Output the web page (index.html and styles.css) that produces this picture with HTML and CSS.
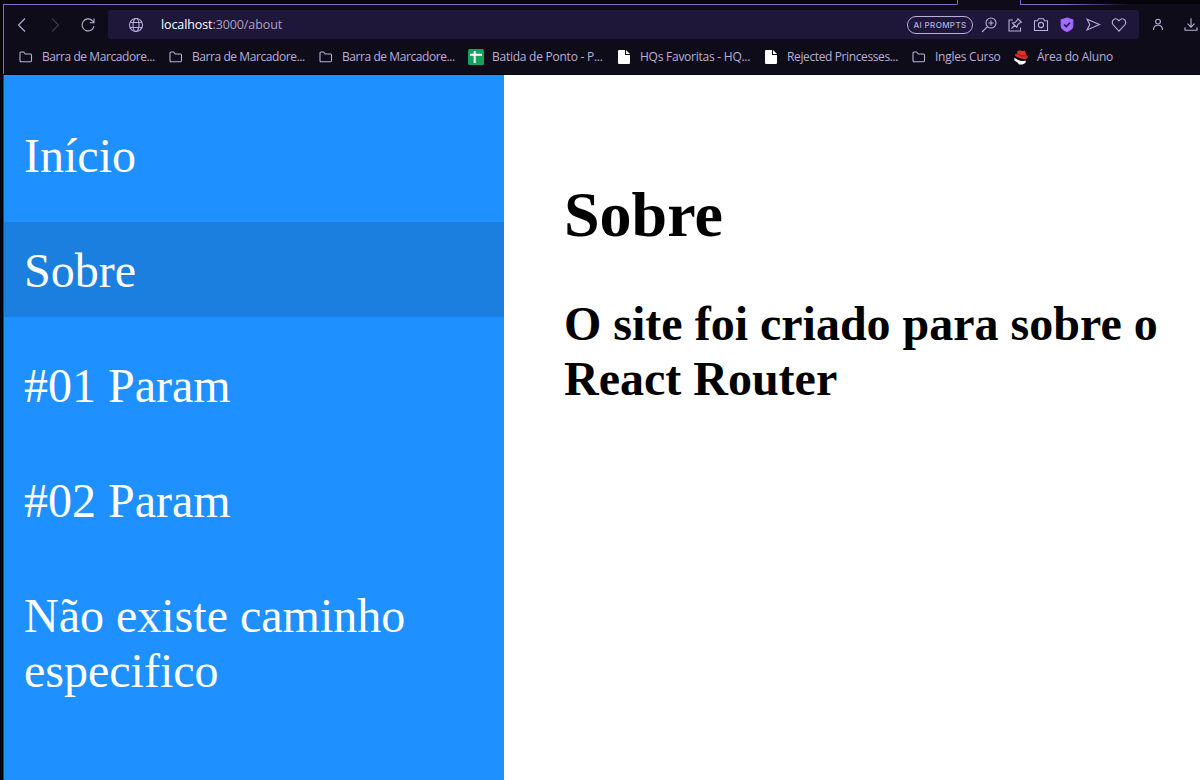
FILE: index.html
```html
<!DOCTYPE html>
<html lang="pt-BR">
<head>
<meta charset="utf-8">
<title>Sobre</title>
<link rel="stylesheet" href="styles.css">
</head>
<body>
<svg class="defs" width="0" height="0"><defs>
<symbol id="folder" viewBox="0 0 14 12"><path d="M1 2.2Q1 1 2.2 1H4.6L6.2 3H11.4Q12.5 3 12.5 4.2V9.6Q12.5 10.8 11.4 10.8H2.2Q1 10.8 1 9.6Z"/></symbol>
<symbol id="page" viewBox="0 0 12 14"><path d="M0 1Q0 0 1 0H7V5H12V13Q12 14 11 14H1Q0 14 0 13ZM8 0L12 4H8Z" fill="#fff" stroke="none"/></symbol>
</defs></svg>
<div class="window">
<header class="chrome">
  <div class="tabs-edge"><div class="edge-left"></div><div class="tab-gap"></div><div class="edge-right"></div></div>
  <div class="toolbar">
    <div class="controls">
      <svg class="icon" width="16" height="16" viewBox="0 0 16 16"><path d="M11 1.5L4.5 8L11 14.5"/></svg>
      <svg class="icon dim" width="16" height="16" viewBox="0 0 16 16"><path d="M5 1.5L11.5 8L5 14.5"/></svg>
      <svg class="icon" width="16" height="16" viewBox="0 0 16 16"><path d="M14 9A6 6 0 1 1 12.5 3.8L14 5.5M14 1.5V5.7H9.8"/></svg>
    </div>
    <div class="address">
      <svg class="icon" width="16" height="16" viewBox="0 0 16 16"><circle cx="8" cy="8" r="6.5"/><ellipse cx="8" cy="8" rx="3" ry="6.5"/><path d="M2.2 5.5H13.8M2.2 10.5H13.8"/></svg>
      <div class="url"><b>localhost</b>:3000/about</div>
      <div class="actions">
        <span class="prompts">AI PROMPTS</span>
        <svg class="icon" width="16" height="16" viewBox="0 0 16 16"><circle cx="10" cy="6" r="5"/><path d="M6.5 9.6L1 15M7.5 6H12.5M10 3.5V8.5"/></svg>
        <svg class="icon" width="16" height="16" viewBox="0 0 16 16"><path d="M6 3H2V14H13.5V10.5M4.5 11.5L8 8M5.5 6L9.8 10.3L10.8 7.5L14 4.8L11.2 2L8.5 5.2ZM10.5 1.3L14.7 5.5"/></svg>
        <svg class="icon" width="16" height="16" viewBox="0 0 16 16"><path d="M1.5 3.7H4.5L5.5 1.7H10.5L11.5 3.7H14.5V13.5H1.5Z"/><circle cx="8" cy="8" r="2.6"/></svg>
        <svg class="icon" width="16" height="16" viewBox="0 0 16 16"><path d="M8 1L13.8 3V8.5Q13.8 12.5 8 14.5Q2.2 12.5 2.2 8.5V3Z" fill="#a46cff" stroke="#a46cff"/><path d="M5 7.5L7.3 9.7L11 5.7" stroke="#221342" stroke-width="1.6"/></svg>
        <svg class="icon" width="16" height="16" viewBox="0 0 16 16"><path d="M2 2.2L14.5 7.6L2 13L4.8 7.6Z"/></svg>
        <svg class="icon" width="16" height="16" viewBox="0 0 16 16"><path d="M8 14.2L2.3 8C-.3 4.7 3 .2 6.6 2.4L8 3.8L9.4 2.4C13 .2 16.3 4.7 13.7 8Z"/></svg>
      </div>
    </div>
    <div class="extras">
      <svg class="icon" width="16" height="16" viewBox="0 0 16 16"><circle cx="8" cy="4.6" r="2.4"/><path d="M3.5 13Q3.5 8.2 8 8.2T12.5 13"/></svg>
      <svg class="icon" width="16" height="16" viewBox="0 0 16 16"><path d="M8 1.2V10M4.5 6.7L8 10.2L11.5 6.7M2 10.3V13.3H14V10.3"/></svg>
    </div>
  </div>
  <nav class="bookmarks">
    <a class="mark wide"><svg class="icon" width="14" height="12"><use href="#folder"/></svg><span>Barra de Marcadore...</span></a>
    <a class="mark wide"><svg class="icon" width="14" height="12"><use href="#folder"/></svg><span>Barra de Marcadore...</span></a>
    <a class="mark third"><svg class="icon" width="14" height="12"><use href="#folder"/></svg><span>Barra de Marcadore...</span></a>
    <a class="mark sheet"><svg width="16" height="16" viewBox="0 0 16 16"><rect width="16" height="16" rx="1.5" fill="#16a05d"/><path d="M2 5.8H14M6.7 2V14" stroke="#fff" stroke-width="2"/></svg><span>Batida de Ponto - P...</span></a>
    <a class="mark doc"><svg width="12" height="14"><use href="#page"/></svg><span>HQs Favoritas - HQ...</span></a>
    <a class="mark doc rejected"><svg width="12" height="14"><use href="#page"/></svg><span>Rejected Princesses...</span></a>
    <a class="mark course"><svg class="icon" width="14" height="12"><use href="#folder"/></svg><span>Ingles Curso</span></a>
    <a class="mark student"><svg width="16" height="16" viewBox="0 0 16 16"><path d="M1.2 9L4 10L7 11.5L13 11.8L12.3 14L9.5 15.6H6L4.5 13.5L1.5 11.5Z" fill="#fff"/><path d="M1 6.5Q3 11 8 11.8Q14 12 15 9L12 7L3 5Z" fill="#05040a"/><path d="M4.5 2L7 1.2L9 2L12 1.8L13.3 6L15 8Q14.5 10.3 10.5 10Q4.5 9.3 1.8 6.2L2 5L4 5.2Z" fill="#e32a2e"/><path d="M4.3 4.8Q8 7.8 12.8 7" fill="none" stroke="#771219" stroke-width=".8"/></svg><span>Área do Aluno</span></a>
  </nav>
</header>
<div class="app">
  <aside class="menu">
    <a class="link">Início</a>
    <a class="link active">Sobre</a>
    <a class="link">#01 Param</a>
    <a class="link">#02 Param</a>
    <a class="link">Não existe caminho especifico</a>
  </aside>
  <main class="content">
    <h1>Sobre</h1>
    <h2>O site foi criado para sobre o React Router</h2>
  </main>
</div>
</div>
</body>
</html>
```
FILE: styles.css
```css
* { box-sizing: border-box; }
body { margin: 0; height: 780px; overflow: hidden; background: #07050c; }
.defs { display: block; }
.window { display: flex; flex-direction: column; height: 780px; padding-left: 3px; }
.chrome { height: 75px; flex: none; border-bottom: 1px solid #07060c; font-family: "Open Sans", sans-serif; }
.tabs-edge { display: flex; height: 10px; background: linear-gradient(#07050c 4px, #0f0c1a 4px); }
.edge-left { width: 954px; height: 5px; border-right: 1px solid #8a66cf; border-bottom: 1px solid #8a66cf; border-bottom-right-radius: 2px; }
.edge-left, .edge-right { flex: none; }
.tab-gap { width: 63px; height: 5px; background: #0f0c1a; }
.edge-right { width: 180px; height: 5px; border-left: 1px solid #8a66cf; background: linear-gradient(90deg, #8a66cf 25%, #0f0c1a 60%) bottom / 100% 1px no-repeat; }
.toolbar { display: flex; align-items: center; height: 29px; background: #0f0c1a; box-shadow: 0 -5px #0f0c1a; border-left: 1px solid #8a66cf; clip-path: inset(0); }
.tabs-edge { border-image: linear-gradient(transparent 4px, #8a66cf 4px) 1; border-width: 0 0 0 1px; border-style: solid; }
.controls { display: flex; gap: 17px; width: 104px; padding-left: 10px; }
.icon { flex: none; fill: none; stroke: #b9afd8; stroke-width: 1.1; }
.dim { stroke: #3f3a52; }
.address { display: flex; align-items: center; width: 1031px; height: 29px; padding-left: 20px; border-radius: 3px; background: #1e173a; }
.url { width: 746px; padding-left: 17px; font-size: 12.5px; letter-spacing: -.1px; color: #a99fc8; white-space: nowrap; }
.url b { font-weight: 400; color: #fff; }
.actions { display: flex; align-items: center; gap: 10px; margin-left: 17px; }
.prompts { width: 66px; height: 18px; margin-right: -2px; border: 1px solid #b9afd8; border-radius: 9px; font: 500 8px/16px Inter, sans-serif; letter-spacing: .38px; text-align: center; color: #b9afd8; white-space: nowrap; }
.extras { display: flex; flex: none; gap: 17px; padding-left: 11px; }
.bookmarks { display: flex; align-items: center; height: 35px; padding-left: 15px; background: #0f0c1a; border-left: 1px solid #8a66cf; font-size: 12px; color: #b9afd8; white-space: nowrap; }
.mark { display: flex; flex: none; align-items: center; gap: 8px; letter-spacing: -.25px; }
.wide, .third { gap: 9px; letter-spacing: -.43px; }
.wide { width: 150px; }
.third { width: 149px; }
.sheet { width: 150px; }
.doc { width: 147px; gap: 10px; }
.rejected { letter-spacing: -.38px; }
.course { width: 101px; gap: 9px; }
.student { gap: 8px; }
.app { display: flex; flex: 1; border-left: 1px solid #293d78; font-family: "Liberation Serif", serif; }
.menu { display: flex; flex-direction: column; gap: 20px; width: 500px; padding-top: 32px; background: #1e90ff; }
.link { padding: 21px 20px 19px; font-size: 48px; line-height: 55px; color: #fff; }
.active { background: #1b7fdf; }
.content { flex: 1; padding: 103px 20px 0 60px; background: #fff; color: #000; }
h1 { margin: 0; font-size: 64px; line-height: 74px; }
h2 { margin: 44px 0 0; font-size: 48px; line-height: 55px; }
```
